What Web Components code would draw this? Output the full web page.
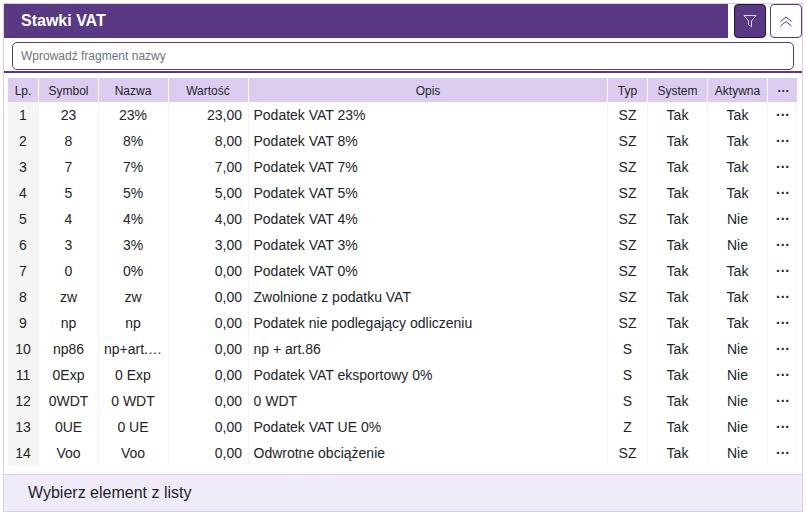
<!DOCTYPE html>
<html lang="pl">
<head>
<meta charset="utf-8">
<title>Stawki VAT</title>
<style>
  html, body { margin: 0; background: #fff; }
  body { font-family: "Liberation Sans", Arial, sans-serif; color: #212529; }
</style>
</head>
<body>
<vat-panel>
  <vat-header slot="header" title-text="Stawki VAT"></vat-header>
  <vat-search slot="search" placeholder="Wprowadź fragment nazwy"></vat-search>
  <vat-table slot="table"></vat-table>
  <span slot="footer">Wybierz element z listy</span>
</vat-panel>

<script>
class VatPanel extends HTMLElement {
  constructor() {
    super();
    this.attachShadow({mode: 'open'}).innerHTML = `
    <style>
      :host {
        display: flex;
        flex-direction: column;
        box-sizing: border-box;
        width: 800px;
        height: 509px;
        margin: 3px;
        border: 1px solid #dccdf0;
      }
      .main { flex: 1; min-height: 0; }
      footer {
        box-sizing: border-box;
        height: 37px;
        padding-left: 24px;
        display: flex;
        align-items: center;
        font-size: 16px;
        background: #f0ebf8;
        border-top: 1px solid #dccdf0;
      }
    </style>
    <slot name="header"></slot>
    <slot name="search"></slot>
    <div class="main"><slot name="table"></slot></div>
    <footer><slot name="footer"></slot></footer>`;
  }
}

class VatHeader extends HTMLElement {
  constructor() {
    super();
    const title = this.getAttribute('title-text') || '';
    this.attachShadow({mode: 'open'}).innerHTML = `
    <style>
      :host { display: flex; height: 34px; }
      h1 {
        flex: 1;
        margin: 0;
        padding-left: 17px;
        font-size: 16px;
        line-height: 34px;
        font-weight: 700;
        color: #fff;
        background: #593884;
      }
      button {
        box-sizing: border-box;
        width: 32px;
        height: 34px;
        margin-left: 6px;
        padding: 0;
        display: flex;
        align-items: center;
        justify-content: center;
        border-radius: 4px;
        border: 1px solid #593884;
        background: #fff;
        color: #593884;
      }
      button + button { margin-left: 4px; }
      button.on { background: #593884; color: #dccdf0; border-color: #1f1630; }
      svg { display: block; }
    </style>
    <h1>${title}</h1>
    <button class="on" type="button" aria-label="Filtr">
      <svg width="16" height="16" viewBox="0 0 16 16" fill="none" stroke="currentColor" stroke-width="1" stroke-linejoin="round">
        <path d="M2 2.5h12L9.5 8v5.5l-3-1.5V8z"/>
      </svg>
    </button>
    <button type="button" aria-label="Zwiń">
      <svg width="16" height="16" viewBox="0 0 16 16" fill="none" stroke="currentColor" stroke-width="1">
        <path d="M2.5 8.5L8 4l5.5 4.5M2.5 13L8 8.5l5.5 4.5"/>
      </svg>
    </button>`;
  }
}

class VatSearch extends HTMLElement {
  constructor() {
    super();
    const placeholder = this.getAttribute('placeholder') || '';
    this.attachShadow({mode: 'open'}).innerHTML = `
    <style>
      :host {
        display: block;
        padding: 4px 8px 1px;
        border-bottom: 2px solid #593884;
      }
      input {
        display: block;
        box-sizing: border-box;
        width: 782px;
        height: 28px;
        padding: 0 8px;
        border: 1px solid #593884;
        border-radius: 5px;
        outline: none;
        font: 12px "Liberation Sans", Arial, sans-serif;
        background: #fff;
      }
      input::placeholder { color: #6c757d; opacity: 1; }
    </style>
    <input type="text" placeholder="${placeholder}">`;
  }
}

const COLUMNS = [
  {label: 'Lp.', width: 31},
  {label: 'Symbol', width: 60},
  {label: 'Nazwa', width: 70, cls: 'nudge'},
  {label: 'Wartość', width: 80, cls: 'nudge'},
  {label: 'Opis', width: 359},
  {label: 'Typ', width: 40},
  {label: 'System', width: 60},
  {label: 'Aktywna', width: 60},
  {label: '···', width: 29, cls: 'more'}
];

const RATES = [
  ['23', '23%', '23,00', 'Podatek VAT 23%', 'SZ', 'Tak', 'Tak'],
  ['8', '8%', '8,00', 'Podatek VAT 8%', 'SZ', 'Tak', 'Tak'],
  ['7', '7%', '7,00', 'Podatek VAT 7%', 'SZ', 'Tak', 'Tak'],
  ['5', '5%', '5,00', 'Podatek VAT 5%', 'SZ', 'Tak', 'Tak'],
  ['4', '4%', '4,00', 'Podatek VAT 4%', 'SZ', 'Tak', 'Nie'],
  ['3', '3%', '3,00', 'Podatek VAT 3%', 'SZ', 'Tak', 'Nie'],
  ['0', '0%', '0,00', 'Podatek VAT 0%', 'SZ', 'Tak', 'Tak'],
  ['zw', 'zw', '0,00', 'Zwolnione z podatku VAT', 'SZ', 'Tak', 'Tak'],
  ['np', 'np', '0,00', 'Podatek nie podlegający odliczeniu', 'SZ', 'Tak', 'Tak'],
  ['np86', 'np+art.86', '0,00', 'np + art.86', 'S', 'Tak', 'Nie'],
  ['0Exp', '0 Exp', '0,00', 'Podatek VAT eksportowy 0%', 'S', 'Tak', 'Nie'],
  ['0WDT', '0 WDT', '0,00', '0 WDT', 'S', 'Tak', 'Nie'],
  ['0UE', '0 UE', '0,00', 'Podatek VAT UE 0%', 'Z', 'Tak', 'Nie'],
  ['Voo', 'Voo', '0,00', 'Odwrotne obciążenie', 'SZ', 'Tak', 'Nie']
];

class VatTable extends HTMLElement {
  constructor() {
    super();
    const cols = COLUMNS.map(c => `<col style="width:${c.width}px">`).join('');
    const head = COLUMNS.map(c => `<th class="${c.cls || ''}">${c.label}</th>`).join('');
    const body = RATES.map((r, i) => `
      <tr>
        <td class="lp">${i + 1}</td>
        <td>${r[0]}</td>
        <td><div class="cut">${r[1]}</div></td>
        <td class="num">${r[2]}</td>
        <td class="txt">${r[3]}</td>
        <td>${r[4]}</td>
        <td>${r[5]}</td>
        <td>${r[6]}</td>
        <td class="more">···</td>
      </tr>`).join('');
    this.attachShadow({mode: 'open'}).innerHTML = `
    <style>
      :host { display: block; padding: 5px 5px 0 4px; }
      table {
        table-layout: fixed;
        width: 789px;
        border-collapse: separate;
        border-spacing: 0;
        font-size: 14px;
      }
      th {
        height: 23px;
        padding: 1px 0 0;
        font-size: 12px;
        font-weight: 400;
        background: #dccdf0;
        border-right: 1px solid #fff;
      }
      th:last-child { border-right: 0; }
      th.nudge { padding-right: 1px; }
      td {
        height: 26px;
        padding: 0;
        text-align: center;
        border-right: 1px solid #f3f3f3;
      }
      td.lp { background: #f5f5f5; }
      td.num { text-align: right; padding-right: 6px; }
      td.txt { text-align: left; padding-left: 4.5px; }
      .more { font-weight: 700; padding-left: 2px; }
      .cut {
        padding: 0 6px 0 5px;
        white-space: nowrap;
        overflow: hidden;
        text-overflow: ellipsis;
      }
    </style>
    <table>
      <colgroup>${cols}</colgroup>
      <thead><tr>${head}</tr></thead>
      <tbody>${body}</tbody>
    </table>`;
  }
}

customElements.define('vat-panel', VatPanel);
customElements.define('vat-header', VatHeader);
customElements.define('vat-search', VatSearch);
customElements.define('vat-table', VatTable);
</script>
</body>
</html>
